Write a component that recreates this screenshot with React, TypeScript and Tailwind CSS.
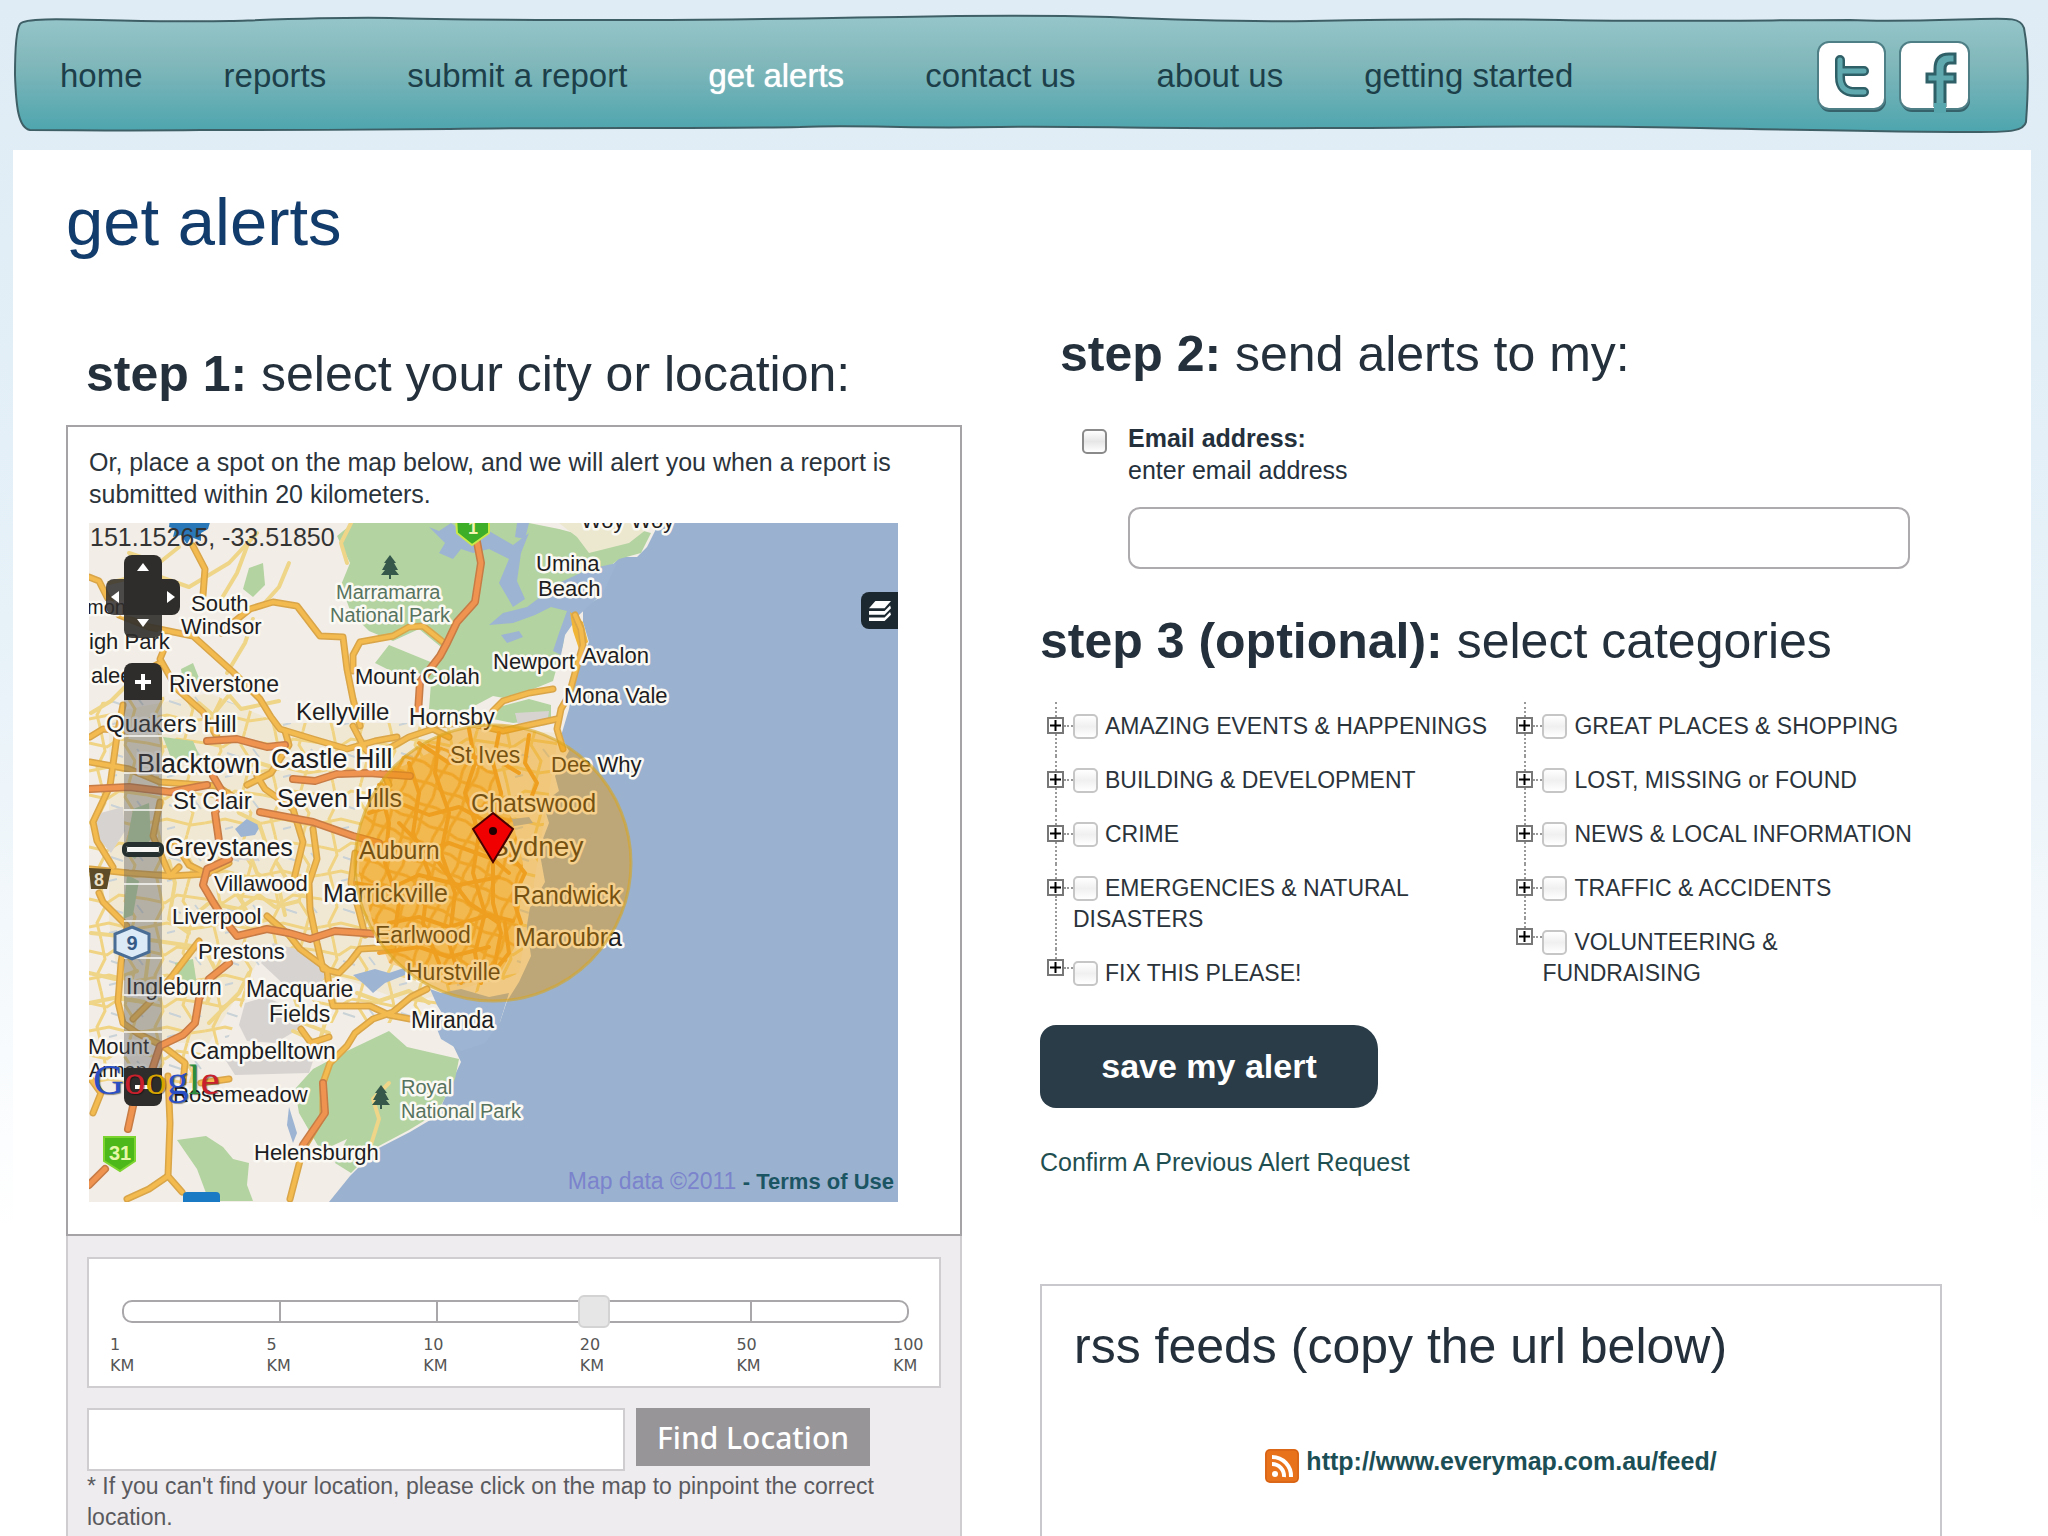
const navItems = [
  'home',
  'reports',
  'submit a report',
  'get alerts',
  'contact us',
  'about us',
  'getting started',
];

const categoryColumns = [
  [
    'AMAZING EVENTS & HAPPENINGS',
    'BUILDING & DEVELOPMENT',
    'CRIME',
    'EMERGENCIES & NATURAL DISASTERS',
    'FIX THIS PLEASE!',
  ],
  [
    'GREAT PLACES & SHOPPING',
    'LOST, MISSING or FOUND',
    'NEWS & LOCAL INFORMATION',
    'TRAFFIC & ACCIDENTS',
    'VOLUNTEERING & FUNDRAISING',
  ],
];

const distances = ['1', '5', '10', '20', '50', '100'];

const parks = [
  'M264 0 248 13 261 40 252 62 262 90 280 108 304 118 330 106 352 124 344 140 300 122 286 140 306 150 330 150 342 160 340 186 372 190 404 173 420 176 464 158 474 122 478 96 500 60 530 36 552 30 562 10 540 4 500 14 470 6 440 0Z',
  'M160 45 174 40 176 62 164 74 154 66Z',
  'M258 528 300 508 318 524 370 536 366 556 348 590 320 607 288 624 262 650 246 640 258 616 232 628 210 590 206 566 224 546Z',
  'M88 617 117 613 134 624 144 636 160 640 158 662 164 678 120 678 108 646Z',
  'M410 184 440 176 462 182 462 196 424 200 404 196Z',
  'M74 214 104 218 110 232 84 240Z',
  'M86 440 104 436 108 462 92 466Z',
  'M92 146 104 140 112 160 96 172Z',
  'M44 286 60 280 62 316 46 336 36 330Z',
  'M38 352 50 358 44 392 34 396Z',
];

const greyAreas = [
  'M4 292 34 284 36 308 22 330 8 314Z',
  'M184 420 214 428 238 448 230 466 204 470 172 440Z',
  'M156 480 176 474 214 490 210 506 186 520 158 518 150 502Z',
  'M132 530 226 532 220 550 146 552Z',
  'M426 190 460 188 458 202 430 206Z',
  'M136 318 170 322 168 338 138 336Z',
];

const inlets = [
  'M478 88 470 110 464 128 472 132 476 112 490 92 514 70 528 40 500 46 470 60 438 84 414 90 400 102 424 100 446 92 462 84Z',
  'M340 4 356 20 350 30 364 36 372 26 384 30 400 26 420 36 410 60 424 84 436 76 428 58 432 30 440 10 424 22 400 8 376 10 362 0 350 8Z',
  'M428 0 440 0 436 16 426 14Z',
  'M264 452 286 446 300 450 318 444 316 452 296 460 284 470 276 462Z',
  'M341 466 352 470 372 466 400 474 420 470 411 499 396 520 372 528 352 516 344 496 358 498 348 482Z',
  'M390 290 412 286 424 296 440 294 444 300 420 304 404 300 392 302Z',
  'M412 112 430 108 434 114 418 120Z',
  'M146 306 160 294 172 302 166 312 152 314Z',
  'M200 584 208 610 204 620 198 602Z',
];

const thinRoads = [
  'M20 60 60 50 100 64 140 40 168 10',
  'M130 80 148 50 160 18',
  'M200 40 190 64 172 84',
  'M110 180 124 192 140 172 152 186 190 178',
  'M40 30 70 40 90 24',
  'M138 150 156 120 164 96',
  'M258 40 252 20 262 0',
  'M2 190 22 178 40 160 60 150',
  'M96 400 120 380 150 386 170 372 186 384 210 378',
  'M140 360 154 380 158 402 180 396',
  'M188 340 200 360 214 372',
  'M160 330 168 350 190 366 196 392',
  'M80 338 86 360 80 396 100 410',
  'M60 430 56 460 70 476',
  'M2 410 40 414 110 424',
  'M0 480 30 474 60 480',
  'M0 450 26 456 48 448',
  'M118 430 128 450 118 480',
  'M120 500 150 470 160 450',
  'M280 628 290 596 284 576 300 560',
  'M140 268 150 290 170 300 180 330',
  'M130 236 150 246 170 240 190 246',
  'M204 470 214 500 240 510',
  'M236 500 230 520 204 508',
  'M268 470 290 478 320 468 340 480',
];

const mainRoads = [
  'M104 23 116 46 114 72',
  'M132 110 146 98 161 86 184 79 208 83 218 96 231 113 254 114 258 146 264 176 271 203',
  'M264 148 264 132 271 119 304 113 320 104 334 103 354 119',
  'M0 54 10 58 18 74 30 92 60 104 104 113 144 149 171 176 182 194 191 206 224 216 258 226 286 218 308 214',
  'M76 124 71 136 88 166 114 189 128 214',
  'M52 150 71 140',
  'M34 182 28 213 21 263 4 299 8 318 24 344',
  'M1 239 40 246 71 259 128 263 150 278',
  'M1 214 14 206 34 208',
  'M158 262 182 250 200 222 196 208',
  'M168 253 176 266 204 286 214 319 204 360',
  'M71 279 64 313 81 353 90 344',
  'M1 346 40 350 81 353 118 351 140 340',
  'M86 320 100 342 118 351',
  'M224 306 228 336 220 360 221 386 228 420 234 446 250 450 261 439 271 426 304 424',
  'M266 330 262 360 270 388 276 412',
  'M178 393 200 412 211 426 238 446 240 466 244 483 281 483 300 492 321 496',
  'M10 370 14 379 38 403 32 440 29 479 34 500 48 510 74 523 96 540 94 560',
  'M44 496 60 480 84 452 110 418',
  'M79 553 81 600 79 653 93 669',
  'M79 653 60 666 38 676',
  'M4 590 12 570 2 556',
  'M112 560 140 556',
  'M338 466 322 474 304 489 284 496 266 510 258 523 241 540 234 560 234 593 214 626 201 676',
  'M212 506 222 520 240 514',
  'M404 188 414 178 440 170 464 166',
  'M486 92 492 106 494 122 486 150 480 172 472 186 468 206 474 226',
  'M468 196 440 202 414 208 380 200 340 202',
  'M264 203 276 226 290 240 300 262',
  'M292 230 320 214 344 206 360 214',
];

const highways = [
  'M388 19 392 40 386 79 368 99 358 120 351 133 338 150 331 159 329 190',
  'M118 218 148 216 178 224 196 222',
  'M204 256 226 258 248 251 280 250 321 253',
  'M1 266 40 264 81 269 118 262',
  'M171 289 224 299 264 313 290 320',
  'M124 253 134 270 126 290 130 318',
  'M140 336 118 346 114 362 124 379 136 398 148 413 178 406 200 410 221 416 246 408 288 411',
  'M140 440 120 456 110 476 106 500 94 512 71 523 60 556 46 574 39 606',
  'M16 646 0 662',
  'M234 560 236 590 214 622',
];

// dense inner-city streets around the harbour
const cityRoads = [
  'M270 330 300 318 330 330 360 320 404 336 420 350',
  'M280 290 310 280 340 292 370 284 400 300',
  'M266 360 300 366 330 352 370 362 410 354',
  'M290 262 300 300 296 340 310 380 304 420',
  'M320 240 330 270 324 310 340 350 334 400 350 440',
  'M350 214 346 250 360 290 352 330 366 370 360 420 372 460',
  'M380 206 386 240 376 270 390 310 384 350 396 390 386 430 392 460',
  'M410 210 404 240 412 270 404 300',
  'M440 212 436 240 448 260 440 280',
  'M300 400 330 394 360 404 400 392 424 398',
  'M290 430 330 424 360 434 400 424',
  'M330 220 360 240 400 232 430 250',
  'M404 340 404 380 412 410 404 450 420 430 416 400',
  'M310 300 350 340 380 380 410 400',
  'M420 330 436 350 424 376 432 400',
];

type MapLabel = { text: string; x: number; y: number; size: number; park?: boolean };

const mapLabels: MapLabel[] = [
  { text: 'mond', x: -2, y: 91, size: 20 },
  { text: 'igh Park', x: 0, y: 126, size: 22 },
  { text: 'alee', x: 2, y: 160, size: 22 },
  { text: 'South', x: 102, y: 88, size: 22 },
  { text: 'Windsor', x: 92, y: 111, size: 22 },
  { text: 'Riverstone', x: 80, y: 169, size: 23 },
  { text: 'Quakers Hill', x: 17, y: 209, size: 24 },
  { text: 'Kellyville', x: 207, y: 197, size: 24 },
  { text: 'Mount Colah', x: 266, y: 161, size: 22 },
  { text: 'Hornsby', x: 320, y: 202, size: 23 },
  { text: 'Blacktown', x: 48, y: 250, size: 27 },
  { text: 'Castle Hill', x: 182, y: 245, size: 27 },
  { text: 'St Clair', x: 84, y: 286, size: 24 },
  { text: 'Seven Hills', x: 188, y: 284, size: 25 },
  { text: 'St Ives', x: 361, y: 240, size: 23 },
  { text: 'Greystanes', x: 76, y: 333, size: 25 },
  { text: 'Auburn', x: 270, y: 336, size: 25 },
  { text: 'Marramarra', x: 247, y: 76, size: 20, park: true },
  { text: 'National Park', x: 241, y: 99, size: 20, park: true },
  { text: 'Woy Woy', x: 492, y: 5, size: 22 },
  { text: 'Umina', x: 447, y: 48, size: 22 },
  { text: 'Beach', x: 449, y: 73, size: 22 },
  { text: 'Newport', x: 404, y: 146, size: 22 },
  { text: 'Avalon', x: 493, y: 140, size: 22 },
  { text: 'Mona Vale', x: 475, y: 180, size: 22 },
  { text: 'Dee Why', x: 462, y: 249, size: 22 },
  { text: 'Chatswood', x: 382, y: 289, size: 25 },
  { text: 'Sydney', x: 401, y: 333, size: 28 },
  { text: 'Villawood', x: 125, y: 368, size: 22 },
  { text: 'Marrickville', x: 234, y: 379, size: 25 },
  { text: 'Liverpool', x: 83, y: 401, size: 22 },
  { text: 'Prestons', x: 109, y: 436, size: 22 },
  { text: 'Ingleburn', x: 37, y: 472, size: 23 },
  { text: 'Macquarie', x: 157, y: 474, size: 23 },
  { text: 'Fields', x: 180, y: 499, size: 23 },
  { text: 'Earlwood', x: 286, y: 420, size: 23 },
  { text: 'Hurstville', x: 317, y: 457, size: 23 },
  { text: 'Miranda', x: 322, y: 505, size: 23 },
  { text: 'Mount', x: -1, y: 531, size: 22 },
  { text: 'Annan', x: 0, y: 554, size: 20 },
  { text: 'Campbelltown', x: 101, y: 536, size: 23 },
  { text: 'Rosemeadow', x: 84, y: 579, size: 22 },
  { text: 'Helensburgh', x: 165, y: 637, size: 22 },
  { text: 'Royal', x: 312, y: 571, size: 20, park: true },
  { text: 'National Park', x: 312, y: 595, size: 20, park: true },
  { text: 'Randwick', x: 424, y: 381, size: 25 },
  { text: 'Maroubra', x: 426, y: 423, size: 25 },
];

const landShape =
  'M0 0H566V8L558 24 548 34 531 34 516 50 512 74 494 84 494 99 500 119 490 143 484 163 480 186 472 213 480 228 466 253 470 268 454 280 460 300 450 326 456 359 436 393 442 433 430 459 418 478 411 499 380 510 361 516 372 539 364 556 348 593 321 609 288 626 261 653 240 679H0Z';

function Roads({ paths, color, width }: { paths: string[]; color: string; width: number }) {
  return (
    <g fill="none" stroke={color} strokeWidth={width} strokeLinejoin="round" strokeLinecap="round">
      {paths.map((d) => (
        <path key={d} d={d} />
      ))}
    </g>
  );
}

function Tree({ x, y }: { x: number; y: number }) {
  return (
    <path
      transform={`translate(${x} ${y})`}
      d="M0-12 6-4 4-4 8 3 5 3 9 8 1 8 1 12-1 12-1 8-9 8-5 3-8 3-4-4-6-4Z"
      fill="#35584a"
    />
  );
}

function MapDrawing() {
  return (
    <svg viewBox="0 0 809 679" className="block w-full" aria-label="Map of Sydney">
      <defs>
        <pattern id="streets" width="58" height="52" patternUnits="userSpaceOnUse">
          <path
            d="M0 12 18 16 30 8 58 12M12 0 16 20 8 36 12 52M40 0 36 14 46 30 40 52M0 40 20 36 44 42 58 40"
            fill="none"
            stroke="#f0d484"
            strokeWidth="3"
          />
          <path d="M22 22 34 26M48 18 54 26M20 46 28 44" stroke="#c9d2d6" strokeWidth="2" />
        </pattern>
        <pattern id="lanes" width="31" height="37" patternUnits="userSpaceOnUse" patternTransform="rotate(24)">
          <path d="M0 8 12 11 31 8M8 0 11 16 8 37M0 28 16 25 31 28M23 0 20 20 23 37" fill="none" stroke="#eeae45" strokeWidth="3" />
        </pattern>
      </defs>
      <rect width="809" height="679" fill="#9ab2cf" />
      <path d={landShape} fill="#f2ede6" />
      <path d="M20 190 120 170 190 200 320 200 470 210 450 330 430 450 320 480 240 450 180 420 120 520 40 520 20 400Z" fill="#f1e8d4" />
      <path d="M0 180 120 170 190 200 320 200 470 210 450 330 430 450 320 500 240 500 180 420 120 560 0 560Z" fill="url(#streets)" />
      {parks.map((d) => (
        <path key={d} d={d} fill="#b3d3a1" />
      ))}
      {greyAreas.map((d) => (
        <path key={d} d={d} fill="#d7d3d1" />
      ))}
      <path d="M470 0 488 14 500 30 540 20 558 6 540 0Z" fill="#ece8cf" />
      {inlets.map((d) => (
        <path key={d} d={d} fill="#9db4d3" />
      ))}
      <path d="M481 89 494 99 499 119 490 126 484 108Z" fill="#f0b436" />

      <path d="M272 300 300 250 340 230 404 250 424 300 434 340 428 420 408 456 360 462 300 440 284 400 270 350Z" fill="#f6d08c" />
      <path d="M272 300 300 240 340 220 404 240 424 300 434 340 428 420 408 456 360 462 300 440 284 400 270 350Z" fill="url(#lanes)" />
      <Roads paths={thinRoads} color="#eed588" width={4} />
      <Roads paths={mainRoads} color="#d9a548" width={7} />
      <Roads paths={mainRoads} color="#f3bb4f" width={4} />
      <Roads paths={cityRoads} color="#efa436" width={4} />
      <Roads paths={highways} color="#c77b45" width={8} />
      <Roads paths={highways} color="#ee9350" width={5} />
      <Tree x={301} y={44} />
      <Tree x={292} y={574} />

      {/* Route shields */}
      <path d="M81-4H122L119 6 112 10 112 18 102 14 98 21 92 12 84 14 86 6 80 4Z" fill="#2a78b8" />
      <path d="M367-6H400V10L383 22 368 10Z" fill="#3cae28" stroke="#c9e84a" strokeWidth="2" />
      <path d="M15 614H46V638L31 648 15 638Z" fill="#4cb81a" stroke="#7bd42f" strokeWidth="2" />
      <path d="M0 345 22 346 18 366H2Z" fill="#5d4c27" />
      <rect x="94" y="669" width="37" height="20" rx="4" fill="#1a7ac4" />
      <g className="font-bold" fontFamily="Liberation Sans, sans-serif" textAnchor="middle">
        <text x="384" y="11" fontSize="18" fill="#f4f3b0">1</text>
        <text x="31" y="637" fontSize="20" fill="#e6f7a9">31</text>
        <text x="10" y="363" fontSize="18" fill="#e8dfc6">8</text>
      </g>

      <g fontFamily="Liberation Sans, sans-serif" stroke="#fbf9f3" strokeWidth="5" strokeLinejoin="round" paintOrder="stroke">
        {mapLabels.map(({ text, x, y, size, park }) => (
          <text key={`${text}-${y}`} x={x} y={y} fontSize={size} fill={park ? '#56735f' : '#1d1d22'}>
            {text}
          </text>
        ))}
      </g>

      {/* Alert radius */}
      <circle cx="404" cy="340" r="138" fill="#ee9900" fillOpacity="0.42" stroke="#d9a520" strokeOpacity="0.6" strokeWidth="3" />
      <path d="M404 290 424 306 404 339 384 306Z" fill="#f00000" stroke="#4a0000" strokeWidth="2" />
      <circle cx="404" cy="308" r="4" fill="#200000" />

      <text x="1" y="23" fontFamily="Liberation Sans, sans-serif" fontSize="25" fill="#333333">
        151.15265, -33.51850
      </text>
    </svg>
  );
}

function GoogleMark() {
  return (
    <span className="absolute left-1 top-[532px] font-['Liberation_Serif',serif] text-[43px] leading-[50px] [text-shadow:1px_1px_1px_rgba(0,0,0,0.45)]">
      <span className="text-[#2a4fc4]">G</span>
      <span className="text-[#c8202c]">o</span>
      <span className="text-[#d8a400]">o</span>
      <span className="text-[#2a4fc4]">g</span>
      <span className="text-[#2c8c3a]">l</span>
      <span className="text-[#c8202c]">e</span>
    </span>
  );
}

function MapControls() {
  return (
    <>
      <div className="absolute left-[17px] top-8 grid grid-cols-[18px_38px_18px] grid-rows-[24px_36px_23px] text-white">
        <button aria-label="Pan up" className="col-start-2 flex items-center justify-center rounded-t-lg bg-[#2f2d2b]">
          <svg width="12" height="8"><path d="M6 0 12 8H0Z" fill="white" /></svg>
        </button>
        <button aria-label="Pan left" className="col-start-1 row-start-2 flex items-center justify-center rounded-l-lg bg-[#2f2d2b]/85">
          <svg width="8" height="12"><path d="M0 6 8 0V12Z" fill="white" /></svg>
        </button>
        <span className="col-start-2 row-start-2 bg-[#2f2d2b]" />
        <button aria-label="Pan right" className="col-start-3 row-start-2 flex items-center justify-center rounded-r-lg bg-[#2f2d2b]">
          <svg width="8" height="12"><path d="M8 6 0 0V12Z" fill="white" /></svg>
        </button>
        <button aria-label="Pan down" className="col-start-2 row-start-3 flex items-start justify-center rounded-b-lg bg-[#2f2d2b]/90 pt-1">
          <svg width="12" height="8"><path d="M6 8 12 0H0Z" fill="white" /></svg>
        </button>
      </div>
      <div className="absolute left-[35px] top-[140px] flex w-[38px] flex-col">
        <button aria-label="Zoom in" className="flex h-[37px] items-center justify-center rounded-t-lg bg-[#2f2d2b]">
          <svg width="18" height="18"><path d="M9 1V17M1 9H17" stroke="white" strokeWidth="4" /></svg>
        </button>
        <div className="flex h-[368px] flex-col divide-y-2 divide-white/70 bg-[#5d5d60]/40">
          {Array.from({ length: 10 }, (_, i) => (
            <span key={i} className="flex-1" />
          ))}
        </div>
        <button aria-label="Zoom out" className="flex h-[38px] items-center justify-center rounded-b-lg bg-[#2f2d2b]">
          <svg width="18" height="18"><path d="M1 9H17" stroke="white" strokeWidth="4" /></svg>
        </button>
      </div>
      <svg viewBox="0 0 38 36" className="absolute left-6 top-[402px] h-9 w-[38px]">
        <path d="M19 2 36 9V27L19 34 2 27V9Z" fill="#dce9f6" stroke="#4a6d96" strokeWidth="3" />
        <text x="19" y="25" fontSize="20" fontWeight="bold" textAnchor="middle" fill="#365a86">9</text>
      </svg>
      <span className="absolute left-[33px] top-[319px] h-[15px] w-[42px] rounded-md border-4 border-[#26302f] bg-white/90 ring-1 ring-inset ring-[#26302f]" />
      <button aria-label="Layers" className="absolute right-0 top-[69px] flex h-[37px] w-[37px] items-center justify-center rounded-l-lg bg-[#1c2830]">
        <svg width="24" height="22" viewBox="0 0 26 24" fill="white">
          <path d="M8 1H25L18 9H1Z" />
          <path d="M1 12H18L24 6 25 9 18 16H1Z" />
          <path d="M1 19H18L24 13 25 16 18 23H1Z" />
        </svg>
      </button>
      <GoogleMark />
      <p className="absolute bottom-1 right-1 text-[23px] leading-8 text-[#7b83cc]">
        Map data ©2011{' '}
        <a href="#terms" className="text-[22px] font-bold text-[#1b5563]">- Terms of Use</a>
      </p>
    </>
  );
}

function DistanceSlider() {
  return (
    <div className="border-2 border-[#cfcdd0] bg-white pb-2.5 pl-[21px] pr-3.5 pt-[41px]">
      <div className="relative ml-3 mr-4">
        <div className="flex h-[23px] divide-x-2 divide-[#a9a7aa] rounded-[10px] border-2 border-[#a9a7aa]">
          {distances.slice(1).map((d) => (
            <span key={d} className="flex-1" />
          ))}
        </div>
        <input
          type="range"
          min={0}
          max={5}
          defaultValue={3}
          aria-label="Alert distance"
          className="absolute -left-4 top-[-5px] h-[33px] w-[calc(100%+32px)] appearance-none bg-transparent [&::-webkit-slider-thumb]:h-[33px] [&::-webkit-slider-thumb]:w-8 [&::-webkit-slider-thumb]:appearance-none [&::-webkit-slider-thumb]:rounded-md [&::-webkit-slider-thumb]:border-2 [&::-webkit-slider-thumb]:border-[#d3d3d3] [&::-webkit-slider-thumb]:bg-[#e6e6e6]"
        />
      </div>
      <div className="mt-[11px] flex justify-between font-['DejaVu_Sans',sans-serif] text-base leading-[21px] text-[#555555]">
        {distances.map((d) => (
          <span key={d} className="w-8">
            {d}
            <br />
            KM
          </span>
        ))}
      </div>
    </div>
  );
}

function CategoryList({ items }: { items: string[] }) {
  return (
    <ul>
      {items.map((item, i) => {
        const last = i === items.length - 1;
        return (
          <li key={item} className="flex">
            <div className="flex w-[17px] flex-col items-center">
              <span className={last ? 'h-2.5 border-l-2 border-dotted border-[#999999]' : 'h-[15px] border-l-2 border-dotted border-[#999999]'} />
              <button aria-label={`Expand ${item}`} className="flex size-[17px] items-center justify-center border-2 border-[#777777] bg-white">
                <svg width="11" height="11"><path d="M5.5 0V11M0 5.5H11" stroke="black" strokeWidth="2" /></svg>
              </button>
              {!last && <span className="flex-1 border-l-2 border-dotted border-[#999999]" />}
            </div>
            <span className={last ? 'mt-[18px] h-0 w-[9px] border-t-2 border-dotted border-[#999999]' : 'mt-[23px] h-0 w-[9px] border-t-2 border-dotted border-[#999999]'} />
            <label className="flex-1 pb-3.5 pt-[9px] text-[23px] leading-[31px] text-[#2b333b]">
              <input
                type="checkbox"
                className="mr-[7px] inline-block size-[25px] appearance-none rounded-[5px] border-2 border-[#c6c6c6] bg-gradient-to-b from-white via-[#f0f0f0] to-white align-[-5px]"
              />
              {item}
            </label>
          </li>
        );
      })}
    </ul>
  );
}

function Header() {
  return (
    <header className="relative flex h-[150px] items-center justify-between pl-[60px] pr-[77px]">
      <svg className="absolute inset-0 h-full w-full" viewBox="0 0 2048 150" preserveAspectRatio="none" aria-hidden="true">
        <defs>
          <linearGradient id="bar" x1="0" y1="0" x2="0" y2="1">
            <stop offset="0" stopColor="#95c6ca" />
            <stop offset="0.4" stopColor="#82b8bb" />
            <stop offset="1" stopColor="#4da5ae" />
          </linearGradient>
        </defs>
        <path
          d="M15 75C15 50 16 30 20 24C24 18 60 19 100 20C150 21 180 22 230 21C290 19 340 17 390 18C440 20 520 20 640 20C760 20 800 18 900 17C1000 15 1070 16 1110 17C1180 20 1240 22 1310 21C1400 19 1500 19 1560 20C1640 22 1780 20 1850 20C1890 22 1940 20 1980 19C2010 18 2021 18 2024 28C2030 60 2028 95 2026 122C2024 131 2010 132 1980 132C1900 132 1800 130 1700 128C1560 124 1440 128 1320 128C1180 129 1080 126 1000 127C880 129 860 124 800 127C700 129 560 127 450 129C350 130 300 130 200 130C120 131 80 130 30 130C18 128 16 105 15 75Z"
          fill="url(#bar)"
          stroke="#3f5f66"
          strokeWidth="2"
        />
      </svg>
      <nav className="relative flex gap-[81px] whitespace-nowrap pt-0.5 text-[33px] leading-10 text-[#1d3f4a]">
        {navItems.map((item) => (
          <a
            key={item}
            href={`#${item.replaceAll(' ', '-')}`}
            className={item === 'get alerts' ? 'text-white [text-shadow:0_0_1px_white]' : ''}
          >
            {item}
          </a>
        ))}
      </nav>
      <div className="relative flex gap-3 pt-1">
        <a href="#twitter" aria-label="Twitter">
          <svg width="70" height="72" viewBox="0 0 70 72">
            <rect x="2" y="4" width="67" height="67" rx="11" fill="#35626b" />
            <rect x="1" y="1" width="67" height="67" rx="11" fill="white" stroke="#4f7f86" strokeWidth="2" />
            <g fill="none" strokeLinecap="round" strokeLinejoin="round">
              <path d="M23 19V36Q23 51 38 51H47M23 30H47" stroke="#2f6068" strokeWidth="10" />
              <path d="M23 19V36Q23 51 38 51H47M23 30H47" stroke="#5fa9ae" strokeWidth="5" />
            </g>
          </svg>
        </a>
        <a href="#facebook" aria-label="Facebook">
          <svg width="72" height="72" viewBox="0 0 72 72">
            <rect x="2" y="4" width="69" height="67" rx="11" fill="#35626b" />
            <rect x="1" y="1" width="69" height="67" rx="11" fill="white" stroke="#4f7f86" strokeWidth="2" />
            <path d="M36 66V41H28V33H36V28Q36 13 50 13H56V22H51Q46 22 46 28V33H56V41H46V66" fill="#5fa9ae" stroke="#2f6068" strokeWidth="3" />
            <rect x="35" y="62" width="12" height="10" fill="#58a6ad" />
          </svg>
        </a>
      </div>
    </header>
  );
}

function StepOne() {
  return (
    <section className="mt-5 flex flex-col">
      <h2 className="mb-[21px] pl-5 text-[50px] leading-[60px] text-[#24303b]">
        <b>step 1:</b> select your city or location:
      </h2>
      <div className="border-2 border-[#a5a3a6] bg-white pb-8 pl-[21px] pt-[19px]">
        <p className="text-[25px] leading-8 text-[#2b333b]">
          Or, place a spot on the map below, and we will alert you when a report is submitted within 20 kilometers.
        </p>
        <div className="relative mt-[13px] w-[809px] max-w-full overflow-hidden">
          <MapDrawing />
          <MapControls />
        </div>
      </div>
      <div className="flex-1 border-x-2 border-[#cfcdd0] bg-[#eeecef] px-[19px] pt-[21px]">
        <DistanceSlider />
        <form className="mt-5 flex items-start gap-[11px]">
          <input
            type="text"
            aria-label="Location"
            className="h-[63px] w-[538px] border-2 border-[#cfcdd0] bg-white px-3 text-[25px]"
          />
          <button type="button" className="h-[58px] w-[234px] bg-[#979598] font-['Noto_Sans',sans-serif] text-[30px] font-medium text-white">
            Find Location
          </button>
        </form>
        <p className="pr-10 text-[23px] leading-[31px] text-[#5a5a5e]">
          * If you can't find your location, please click on the map to pinpoint the correct location.
        </p>
      </div>
    </section>
  );
}

function Steps() {
  return (
    <section className="flex flex-col">
      <h2 className="pl-5 text-[50px] leading-[60px] text-[#24303b]">
        <b>step 2:</b> send alerts to my:
      </h2>
      <div className="mt-[38px] flex gap-[21px] pl-[42px] text-[25px] leading-8 text-[#24303b]">
        <input
          id="email-alert"
          type="checkbox"
          className="mt-[7px] size-[25px] shrink-0 appearance-none rounded-[5px] border-2 border-[#8a8a8a] bg-gradient-to-b from-white via-[#e6e6e6] to-white"
        />
        <div className="flex-1 pr-8">
          <label htmlFor="email-alert" className="block font-bold">Email address:</label>
          <label htmlFor="email" className="block">enter email address</label>
          <input id="email" type="email" className="mt-[21px] h-[62px] w-full rounded-xl border-2 border-[#adabae] bg-white px-4" />
        </div>
      </div>

      <h2 className="mt-[42px] text-[50px] leading-[60px] text-[#24303b]">
        <b>step 3 (optional):</b> select categories
      </h2>
      <div className="mt-[31px] grid grid-cols-[470fr_406fr] pl-[7px] pr-5">
        {categoryColumns.map((items) => (
          <CategoryList key={items[0]} items={items} />
        ))}
      </div>

      <button className="mt-[22px] h-[83px] w-[338px] rounded-l-[16px] rounded-r-[24px] bg-[#293c47] text-[34px] font-bold text-white">
        save my alert
      </button>
      <a href="#confirm" className="mt-[38px] self-start text-[25px] leading-8 text-[#1f4f50]">
        Confirm A Previous Alert Request
      </a>

      <div className="mt-[106px] flex-1 border-2 border-b-0 border-[#c9c8cc] pt-[30px]">
        <h2 className="pl-8 text-[50px] leading-[60px] text-[#24303b]">rss feeds (copy the url below)</h2>
        <a href="#feed" className="mt-[69px] flex justify-center gap-[7px] text-[25px] font-bold leading-8 text-[#1c4f55]">
          <svg width="34" height="34" viewBox="0 0 34 34" className="mt-1">
            <rect width="34" height="34" rx="5" fill="#e8711c" />
            <rect x="1" y="1" width="32" height="32" rx="4" fill="none" stroke="#cf5f14" strokeWidth="1" />
            <circle cx="10" cy="25" r="3" fill="white" />
            <path d="M7 15A12 12 0 0 1 19 28M7 8A19 19 0 0 1 26 28" fill="none" stroke="white" strokeWidth="4" />
          </svg>
          http://www.everymap.com.au/feed/
        </a>
      </div>
    </section>
  );
}

export default function App() {
  return (
    <div className="flex min-h-screen flex-col bg-gradient-to-b from-[#dfecf5] via-[#e6f1f8] via-40% to-white to-80% font-['Liberation_Sans',Arial,sans-serif]">
      <Header />
      <main className="ml-[13px] mr-[17px] flex flex-1 flex-col bg-white pl-[53px] pr-[89px] pt-8">
        <h1 className="mb-[62px] text-[67px] leading-[80px] text-[#123c6b]">get alerts</h1>
        <div className="grid flex-1 grid-cols-[896fr_902fr] gap-[78px]">
          <StepOne />
          <Steps />
        </div>
      </main>
    </div>
  );
}
